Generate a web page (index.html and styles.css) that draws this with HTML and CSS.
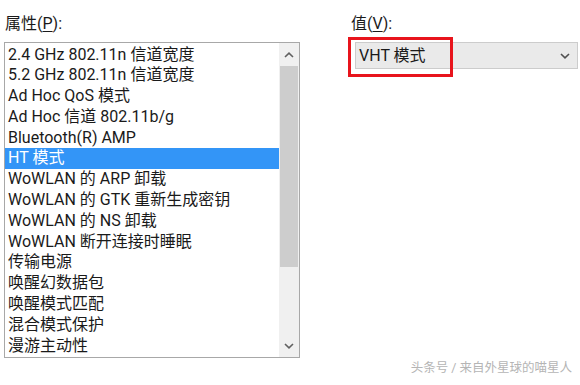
FILE: index.html
```html
<!DOCTYPE html>
<html lang="zh-CN">
<head>
<meta charset="utf-8">
<title>属性</title>
<link rel="stylesheet" href="styles.css">
</head>
<body>
<div class="page">
  <div class="left">
    <div class="label">属性(<u>P</u>):</div>
    <div class="listbox">
      <div class="items">
        <div class="row">2.4 GHz 802.11n 信道宽度</div>
        <div class="row">5.2 GHz 802.11n 信道宽度</div>
        <div class="row">Ad Hoc QoS 模式</div>
        <div class="row">Ad Hoc 信道 802.11b/g</div>
        <div class="row">Bluetooth(R) AMP</div>
        <div class="row selected">HT 模式</div>
        <div class="row">WoWLAN 的 ARP 卸载</div>
        <div class="row">WoWLAN 的 GTK 重新生成密钥</div>
        <div class="row">WoWLAN 的 NS 卸载</div>
        <div class="row">WoWLAN 断开连接时睡眠</div>
        <div class="row">传输电源</div>
        <div class="row">唤醒幻数据包</div>
        <div class="row">唤醒模式匹配</div>
        <div class="row">混合模式保护</div>
        <div class="row">漫游主动性</div>
      </div>
      <div class="scrollbar">
        <div class="sb-btn">
          <svg width="10" height="6" viewBox="0 0 10 6"><path d="M1 5 L5 1.2 L9 5" fill="none" stroke="#606060" stroke-width="1.6"/></svg>
        </div>
        <div class="sb-thumb"></div>
        <div class="sb-track"></div>
        <div class="sb-btn">
          <svg width="10" height="6" viewBox="0 0 10 6"><path d="M1 1 L5 4.8 L9 1" fill="none" stroke="#606060" stroke-width="1.6"/></svg>
        </div>
      </div>
    </div>
  </div>
  <div class="right">
    <div class="label">值(<u>V</u>):</div>
    <div class="combo">
      <span class="combo-text">VHT 模式</span>
      <svg class="combo-arrow" width="10" height="6" viewBox="0 0 10 6"><path d="M1 1 L5 4.8 L9 1" fill="none" stroke="#505050" stroke-width="1.6"/></svg>
    </div>
    <div class="highlight-box"></div>
  </div>
</div>
<div class="watermark">头条号 / 来自外星球的喵星人</div>
</body>
</html>
```
FILE: styles.css
```css
html, body {
  margin: 0;
  padding: 0;
  background: #ffffff;
}
body {
  width: 580px;
  height: 385px;
  overflow: hidden;
  position: relative;
  font-family: Roboto, "Noto Sans CJK SC", sans-serif;
  font-size: 16px;
  color: #1a1a1a;
}
.page {
  display: flex;
  padding: 14px 0 0 4px;
}
.left {
  width: 296px;
}
.label {
  height: 20px;
  line-height: 20px;
  margin-bottom: 8px;
  padding-left: 1px;
  white-space: nowrap;
}
.label u {
  text-decoration-thickness: 1px;
  text-underline-offset: 2px;
}
.listbox {
  border: 1px solid #a8a8a8;
  height: 314px;
  display: flex;
  overflow: hidden;
}
.items {
  flex: 1;
  padding-top: 1.5px;
  overflow: hidden;
}
.row {
  height: 20.8px;
  line-height: 20.8px;
  padding-left: 3px;
  white-space: nowrap;
}
.row.selected {
  background: #3395f7;
  color: #ffffff;
}
.scrollbar {
  width: 20px;
  background: #f0f0f0;
  display: flex;
  flex-direction: column;
}
.sb-btn {
  height: 23px;
  display: flex;
  align-items: center;
  justify-content: center;
}
.sb-thumb {
  height: 201px;
  margin: 0 1px;
  background: #cdcdcd;
}
.sb-track {
  flex: 1;
}
.right {
  position: relative;
  margin-left: 50px;
  width: 225px;
}
.combo {
  margin-left: 5px;
  width: 218px;
  height: 25px;
  border: 1px solid #cccccc;
  background: #eaeaea;
  display: flex;
  align-items: center;
  justify-content: space-between;
  padding-left: 3px;
  box-sizing: content-box;
}
.combo-text {
  line-height: 25px;
}
.combo-arrow {
  margin-right: 7px;
}
.highlight-box {
  position: absolute;
  left: -2px;
  top: 23px;
  width: 99px;
  height: 34px;
  border: 3px solid #e8141c;
}
.watermark {
  position: absolute;
  right: 8px;
  bottom: 9px;
  font-size: 12.5px;
  color: #b5b5b5;
  white-space: nowrap;
}
```
